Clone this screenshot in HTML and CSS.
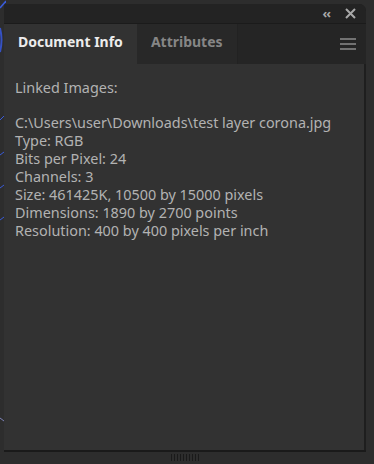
FILE: index.html
```html
<!DOCTYPE html>
<html lang="en">
<head>
    <meta charset="UTF-8">
    <title>Document Info</title>
    <link rel="stylesheet" href="styles.css">
</head>
<body>
    <svg class="art" width="6" height="464" viewBox="0 0 6 464">
        <path d="M0 8 L6 1" stroke="#3a5bd8" stroke-width="1.5" fill="none"/>
        <path d="M0 28 Q3 40 0 52" stroke="#3551c4" stroke-width="2" fill="none"/>
        <path d="M0 120 L4 116" stroke="#3a5bd8" stroke-width="1" fill="none"/>
        <path d="M0 155 L4 152" stroke="#3a5bd8" stroke-width="1" fill="none"/>
        <path d="M0 188 L4 185" stroke="#3a5bd8" stroke-width="1" fill="none"/>
        <path d="M0 220 L4 217" stroke="#3a5bd8" stroke-width="1" fill="none"/>
        <path d="M0 418 L4 421" stroke="#7d83b8" stroke-width="1" fill="none"/>
    </svg>
    <div class="panel">
        <div class="titlebar">
            <span class="collapse">&lsaquo;&lsaquo;</span>
            <svg class="close" width="11" height="11" viewBox="0 0 11 11">
                <path d="M1 1 L10 10 M10 1 L1 10" stroke="#a8a8a8" stroke-width="2"/>
            </svg>
        </div>
        <div class="tabs">
            <div class="tab active">Document Info</div>
            <div class="tab">Attributes</div>
            <div class="tab-rest">
                <svg class="menu" width="16" height="12" viewBox="0 0 16 12">
                    <path d="M0 1 H16 M0 6 H16 M0 11 H16" stroke="#8c8c8c" stroke-width="1.5"/>
                </svg>
            </div>
        </div>
        <div class="content">
            <p>Linked Images:</p>
            <p class="blank"></p>
            <p>C:\Users\user\Downloads\test layer corona.jpg</p>
            <p>Type: RGB</p>
            <p>Bits per Pixel: 24</p>
            <p>Channels: 3</p>
            <p>Size: 461425K, 10500 by 15000 pixels</p>
            <p>Dimensions: 1890 by 2700 points</p>
            <p>Resolution: 400 by 400 pixels per inch</p>
        </div>
        <div class="grip">
            <span></span><span></span><span></span><span></span><span></span>
            <span></span><span></span><span></span><span></span><span></span>
        </div>
    </div>
</body>
</html>
```

FILE: styles.css
```css
body {
    margin: 0;
    height: 464px;
    overflow: hidden;
    background-color: #2d2d2d;
    font-family: "Noto Sans", sans-serif;
    position: relative;
}

.art {
    position: absolute;
    left: 0;
    top: 0;
}

.panel {
    margin: 4px 0 0 4px;
    width: 362px;
    height: 460px;
    display: flex;
    flex-direction: column;
    background-color: #1e1e1e;
    border-top-right-radius: 7px;
    overflow: hidden;
}

.titlebar {
    height: 19px;
    background-color: #232323;
    display: flex;
    align-items: center;
    justify-content: flex-end;
    gap: 15px;
    padding-right: 10px;
    border-bottom: 1px solid #1b1b1b;
}

.collapse {
    color: #a8a8a8;
    font-size: 13px;
    font-weight: bold;
    letter-spacing: -1px;
    line-height: 19px;
}

.tabs {
    height: 40px;
    display: flex;
    background-color: #252525;
}

.tab {
    padding: 0 14px;
    font-size: 14px;
    font-weight: bold;
    line-height: 36px;
    color: #868686;
    background-color: #282828;
}

.tab.active {
    color: #ececec;
    background-color: #323232;
}

.tab-rest {
    flex: 1;
    display: flex;
    align-items: center;
    justify-content: flex-end;
    padding-right: 10px;
    border-left: 1px solid #222;
}

.content {
    flex: 1;
    background-color: #323232;
    padding: 15px 11px;
    margin-right: 2px;
    color: #b2b2b2;
    font-size: 14.4px;
    line-height: 18px;
}

.content p {
    margin: 0;
}

.content .blank {
    height: 17px;
}

.grip {
    height: 10px;
    border-top: 2px solid #1a1a1a;
    background-color: #2d2d2d;
    display: flex;
    justify-content: center;
    gap: 2px;
    padding-top: 2px;
}

.grip span {
    width: 1px;
    height: 7px;
    background-color: #1a1a1a;
}
```
